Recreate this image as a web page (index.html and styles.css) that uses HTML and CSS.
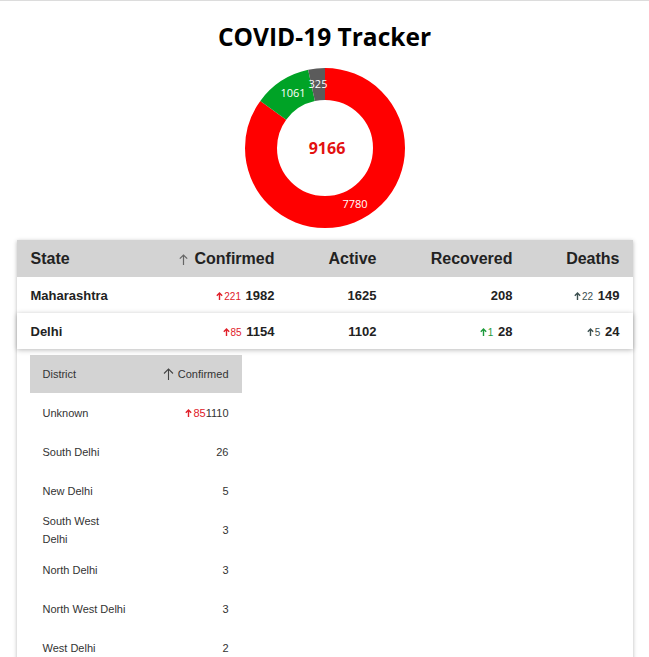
FILE: index.html
```html
<!DOCTYPE html>
<html lang="en">
<head>
<meta charset="utf-8">
<title>COVID-19 Tracker</title>
<link rel="stylesheet" href="styles.css">
</head>
<body>
<div class="page">
  <h1 class="title">COVID-19 Tracker</h1>
  <div class="chart">
    <svg width="160" height="160" viewBox="0 0 160 160">
      <g transform="rotate(-90 80 80)" fill="none" stroke-width="32">
        <circle cx="80" cy="80" r="64" stroke="#ff0000" stroke-dasharray="341.31 402.12"/>
        <circle cx="80" cy="80" r="64" stroke="#00a326" stroke-dasharray="46.55 402.12" stroke-dashoffset="-341.31"/>
        <circle cx="80" cy="80" r="64" stroke="#5b5b5b" stroke-dasharray="14.26 402.12" stroke-dashoffset="-387.86"/>
      </g>
      <text class="seg" x="110" y="137">7780</text>
      <text class="seg" x="48" y="26">1061</text>
      <text class="seg" x="73" y="17">325</text>
      <text class="total" x="82" y="82">9166</text>
    </svg>
  </div>

  <div class="card">
    <div class="row head">
      <div class="cell">State</div>
      <div class="cell num"><svg class="sort" width="9" height="11" viewBox="0 0 9 11"><path d="M4.5 11V1M0.8 4.7L4.5 1l3.7 3.7" fill="none" stroke="#666" stroke-width="1.2"/></svg> Confirmed</div>
      <div class="cell num">Active</div>
      <div class="cell num">Recovered</div>
      <div class="cell num">Deaths</div>
    </div>
    <div class="row">
      <div class="cell name">Maharashtra</div>
      <div class="cell num"><span class="d red"><svg class="up" width="7" height="8" viewBox="0 0 7 8"><path d="M3.5 8V1.2M0.8 3.8L3.5 1.1l2.7 2.7" fill="none" stroke="currentColor" stroke-width="1.4"/></svg>221</span> 1982</div>
      <div class="cell num">1625</div>
      <div class="cell num">208</div>
      <div class="cell num"><span class="d dark"><svg class="up" width="7" height="8" viewBox="0 0 7 8"><path d="M3.5 8V1.2M0.8 3.8L3.5 1.1l2.7 2.7" fill="none" stroke="currentColor" stroke-width="1.4"/></svg>22</span> 149</div>
    </div>
    <div class="row raised">
      <div class="cell name">Delhi</div>
      <div class="cell num"><span class="d red"><svg class="up" width="7" height="8" viewBox="0 0 7 8"><path d="M3.5 8V1.2M0.8 3.8L3.5 1.1l2.7 2.7" fill="none" stroke="currentColor" stroke-width="1.4"/></svg>85</span> 1154</div>
      <div class="cell num">1102</div>
      <div class="cell num"><span class="d green"><svg class="up" width="7" height="8" viewBox="0 0 7 8"><path d="M3.5 8V1.2M0.8 3.8L3.5 1.1l2.7 2.7" fill="none" stroke="currentColor" stroke-width="1.4"/></svg>1</span> 28</div>
      <div class="cell num"><span class="d dark"><svg class="up" width="7" height="8" viewBox="0 0 7 8"><path d="M3.5 8V1.2M0.8 3.8L3.5 1.1l2.7 2.7" fill="none" stroke="currentColor" stroke-width="1.4"/></svg>5</span> 24</div>
    </div>

    <div class="sub">
      <div class="srow shead">
        <div class="scell">District</div>
        <div class="scell snum"><svg class="ssort" width="11" height="12" viewBox="0 0 11 12"><path d="M5.5 12V1M1 5.5L5.5 1l4.5 4.5" fill="none" stroke="#444" stroke-width="1.1"/></svg> Confirmed</div>
      </div>
      <div class="srow">
        <div class="scell">Unknown</div>
        <div class="scell snum"><span class="sd"><svg class="up" width="7" height="8" viewBox="0 0 7 8"><path d="M3.5 8V1.2M0.8 3.8L3.5 1.1l2.7 2.7" fill="none" stroke="currentColor" stroke-width="1.4"/></svg>85</span>1110</div>
      </div>
      <div class="srow">
        <div class="scell">South Delhi</div>
        <div class="scell snum">26</div>
      </div>
      <div class="srow">
        <div class="scell">New Delhi</div>
        <div class="scell snum">5</div>
      </div>
      <div class="srow wrap">
        <div class="scell">South West<br>Delhi</div>
        <div class="scell snum">3</div>
      </div>
      <div class="srow">
        <div class="scell">North Delhi</div>
        <div class="scell snum">3</div>
      </div>
      <div class="srow">
        <div class="scell">North West Delhi</div>
        <div class="scell snum">3</div>
      </div>
      <div class="srow">
        <div class="scell">West Delhi</div>
        <div class="scell snum">2</div>
      </div>
    </div>
  </div>
</div>
</body>
</html>
```

FILE: styles.css
```css
html, body {
  margin: 0;
  padding: 0;
  background: #fff;
  overflow: hidden;
}

.page {
  border-top: 1px solid #dcdcdc;
  font-family: "Liberation Sans", Arial, sans-serif;
  color: #222;
}

.title {
  margin: 0;
  padding-top: 17px;
  line-height: 38px;
  font-family: "Open Sans", "Noto Sans", sans-serif;
  font-weight: 700;
  font-size: 24.5px;
  text-align: center;
  color: #000;
}

.chart {
  display: flex;
  justify-content: center;
  margin-top: 12px;
  height: 160px;
}

.chart svg {
  display: block;
}

.seg {
  font-family: "Open Sans", "Noto Sans", sans-serif;
  font-size: 11px;
  fill: #fff;
  text-anchor: middle;
  dominant-baseline: middle;
}

.total {
  font-family: "Open Sans", "Noto Sans", sans-serif;
  font-size: 16px;
  font-weight: 700;
  fill: #e31010;
  text-anchor: middle;
  dominant-baseline: middle;
}

.card {
  width: 616px;
  margin: 12px auto 0;
  box-shadow: 0 1px 4px rgba(0, 0, 0, 0.28);
  padding-bottom: 40px;
}

.row {
  display: grid;
  grid-template-columns: 110px 134px 102px 136px 107px;
  padding: 0 13px 0 14px;
  height: 36px;
  align-items: center;
  background: #fff;
  font-size: 13px;
  font-weight: 700;
  color: #222;
}

.row.head {
  height: 37px;
  background: #d3d3d3;
  font-size: 16px;
  color: #222;
}

.row.raised {
  position: relative;
  box-shadow: 0 1px 5px rgba(0, 0, 0, 0.28);
}

.num {
  text-align: right;
}

.sort {
  margin-right: 2px;
  vertical-align: -1px;
}

.up {
  margin-right: 1px;
  vertical-align: 0;
}

.d {
  font-size: 10px;
  font-weight: 400;
  margin-right: 1px;
}

.red { color: #e0202a; }
.green { color: #1e9a3c; }
.dark { color: #3c5050; }

.sub {
  width: 212px;
  margin: 6px 0 0 13px;
  font-size: 11px;
  color: #333;
}

.srow {
  display: grid;
  grid-template-columns: 1fr auto;
  align-items: center;
  padding: 0 13px;
  height: 39px;
  white-space: nowrap;
  line-height: 18px;
}

.srow.wrap {
  height: 40px;
}

.srow.shead {
  height: 38px;
  background: #d3d3d3;
}

.snum {
  text-align: right;
}

.ssort {
  margin-right: 1px;
  vertical-align: -2px;
}

.sd {
  color: #e0202a;
}
```
